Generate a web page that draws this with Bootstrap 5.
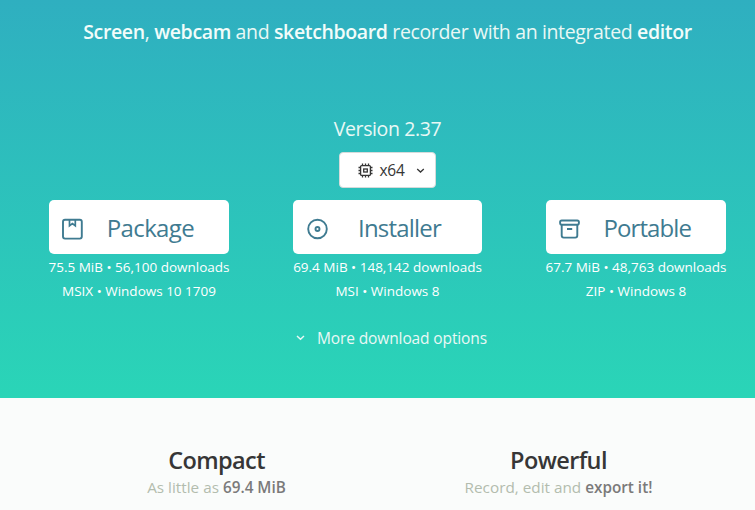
<!DOCTYPE html>
<html lang="en">
<head>
<meta charset="utf-8">
<meta name="viewport" content="width=device-width, initial-scale=1">
<title>Screen, webcam and sketchboard recorder</title>
<link href="https://cdn.jsdelivr.net/npm/bootstrap@5.3.0/dist/css/bootstrap.min.css" rel="stylesheet">
<style>
body { font-family: "Segoe UI", "Open Sans", sans-serif; background: #fafcfb; height: 510px; overflow: hidden; white-space: nowrap; }
body strong { font-weight: 600; }
.page-wide { width: 775px; }
.hero { height: 398px; padding-top: 18px; background: linear-gradient(180deg, #2fafc0, #2ad5b7); color: #e9f8f5; }
.tagline { font-size: 19.5px; line-height: 28px; letter-spacing: -.36px; }
.tagline strong { color: #f2fcfa; }
.version { font-size: 19.5px; line-height: 28px; margin-top: 69px; letter-spacing: -.4px; }
.arch-btn, .arch-btn:hover { width: 97px; height: 36px; margin-top: 9px; padding: 1px 10px 0 18px; background: #fff; border: 1px solid #d5dbdb; border-radius: 4px; color: #363636; font-size: 15.5px; letter-spacing: -.3px; }
.arch-name { margin-right: 5px; padding-top: 1px; }
.downloads { margin-top: 12px; gap: 64px; }
.pack { width: 180px; }
.pack-mid { width: 189px; }
.dl-btn, .dl-btn:hover { height: 54px; padding: 3px 35px 0 11px; background: #fff; border: 0; border-radius: 5px; color: #3f7b91; font-size: 24px; letter-spacing: -.65px; }
.dl-name { margin-top: -2px; }
.dl-tight { letter-spacing: -.9px; }
.pack-mid .dl-btn { padding-right: 41px; letter-spacing: -.8px; }
.dl-info { font-size: 13.5px; line-height: 24px; color: #fff; padding-top: 1px; margin: 0 -4px; }
.more-options, .more-options:hover { height: 24px; margin-top: 23px; padding: 0; font-size: 15.5px; line-height: 24px; color: #e9f8f5; border: 0; letter-spacing: -.12px; gap: 12px; margin-left: 8px; }
.features { width: 684px; padding-top: 47px; }
.features h2 { font-size: 23.5px; line-height: 30px; font-weight: 600; color: #363636; letter-spacing: -.6px; }
.features p { font-size: 15.3px; line-height: 24px; color: #b3bcae; }
.features strong { color: #7a7a7a; }
</style>
</head>
<body>
<main class="page-wide d-flex flex-column align-items-center">
  <section class="hero w-100 d-flex flex-column align-items-center">
    <div class="tagline"><strong>Screen</strong>, <strong>webcam</strong> and <strong>sketchboard</strong> recorder with an integrated <strong>editor</strong></div>
    <div class="version">Version 2.37</div>
    <button class="btn arch-btn d-flex align-items-center justify-content-between" type="button">
      <svg width="15" height="15" viewBox="0 0 15 15" fill="none" stroke="currentColor" stroke-width="1.3"><rect x="2.6" y="2.6" width="9.8" height="9.8" rx="1"/><rect x="5.7" y="6" width="3.6" height="3"/><path d="M4.5 2.5V.5M7.5 2.5V.5M10.5 2.5V.5M4.5 14.5v-2M7.5 14.5v-2M10.5 14.5v-2M2.5 4.5h-2M2.5 7.5h-2M2.5 10.5h-2M14.5 4.5h-2M14.5 7.5h-2M14.5 10.5h-2"/></svg>
      <span class="arch-name">x64</span>
      <svg width="9" height="6" viewBox="0 0 9 6" fill="none" stroke="currentColor" stroke-width="1.3"><path d="M1.2 1l3.3 3L7.8 1"/></svg>
    </button>
    <div class="downloads d-flex justify-content-center">
      <div class="pack text-center">
        <a href="#" class="btn dl-btn d-flex align-items-center justify-content-between">
          <svg width="24" height="24" viewBox="0 0 24 24" fill="none" stroke="currentColor" stroke-width="1.9"><rect x="3" y="2.8" width="18.8" height="18.8" rx="2"/><path d="M9.5 3v5.800l2.900-2.200 2.900 2.200V3" stroke-width="1.7"/></svg>
          <span class="dl-name">Package</span>
        </a>
        <div class="dl-info">75.5 MiB • 56,100 downloads<br>MSIX • Windows 10 1709</div>
      </div>
      <div class="pack-mid text-center">
        <a href="#" class="btn dl-btn d-flex align-items-center justify-content-between">
          <svg width="24" height="24" viewBox="0 0 24 24" fill="none" stroke="currentColor" stroke-width="1.9"><circle cx="13.5" cy="12" r="9.3"/><circle cx="13.5" cy="12" r="2"/></svg>
          <span class="dl-name">Installer</span>
        </a>
        <div class="dl-info">69.4 MiB • 148,142 downloads<br>MSI • Windows 8</div>
      </div>
      <div class="pack text-center">
        <a href="#" class="btn dl-btn d-flex align-items-center justify-content-between">
          <svg width="24" height="24" viewBox="0 0 24 24" fill="none" stroke="currentColor" stroke-width="1.9"><rect x="3.1" y="3.5" width="18.8" height="4.2" rx="1.6"/><path d="M4.7 8v10.600q0 2 2 2h11.600q2 0 2-2V8M10 12h5.200"/></svg>
          <span class="dl-name dl-tight">Portable</span>
        </a>
        <div class="dl-info">67.7 MiB • 48,763 downloads<br>ZIP • Windows 8</div>
      </div>
    </div>
    <button class="btn more-options d-flex align-items-center" type="button">
      <svg width="9" height="6" viewBox="0 0 9 6" fill="none" stroke="currentColor" stroke-width="1.5"><path d="M1 1l3.5 3.200L8 1"/></svg>
      <span class="more-text">More download options</span>
    </button>
  </section>
  <section class="features d-flex text-center">
    <div class="w-50"><h2 class="mb-0">Compact</h2><p class="mb-0">As little as <strong>69.4 MiB</strong></p></div>
    <div class="w-50"><h2 class="mb-0">Powerful</h2><p class="mb-0">Record, edit and <strong>export it!</strong></p></div>
  </section>
</main>
<script src="https://cdn.jsdelivr.net/npm/bootstrap@5.3.0/dist/js/bootstrap.bundle.min.js"></script>
</body>
</html>
